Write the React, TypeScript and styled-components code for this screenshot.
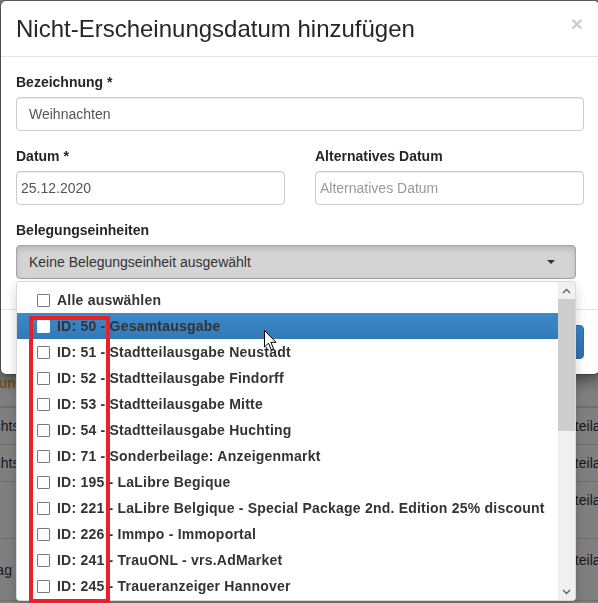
import React from "react";
import styled, { createGlobalStyle } from "styled-components";

const GlobalStyle = createGlobalStyle`
  html, body { margin: 0; padding: 0; }
  body {
    width: 598px;
    height: 603px;
    overflow: hidden;
    background: #fff;
    font-family: "Liberation Sans", Arial, sans-serif;
    font-size: 14px;
    line-height: 20px;
    color: #333;
  }
  * { box-sizing: border-box; }
`;

/* ---------- background page ---------- */
const Page = styled.div`
  position: relative;
  width: 598px;
  height: 603px;
  overflow: hidden;
`;

const PageHead = styled.div`
  height: 365px;
  padding: 20px 15px;
  font-size: 24px;
`;

const Table = styled.table`
  table-layout: fixed;
  border-collapse: collapse;
  width: 844px;
  margin-left: -77px;
`;

const Th = styled.th`
  text-align: left;
  vertical-align: top;
  padding: 8px 8px 13px;
  border-bottom: 2px solid #ddd;
  color: #f0ad4e;
  font-weight: bold;
`;

const Tr = styled.tr<{ $h: number }>`
  height: ${(p) => p.$h}px;
`;

const Td = styled.td`
  padding: 8px;
  border-bottom: 1px solid #ddd;
  vertical-align: middle;
  white-space: normal;
`;

/* ---------- modal ---------- */
const Backdrop = styled.div`
  position: fixed;
  inset: 0;
  background: rgba(0, 0, 0, 0.5);
`;

const Modal = styled.div`
  position: fixed;
  top: 0;
  left: 0;
  width: 600px;
  background: #fff;
  background-clip: padding-box;
  border: 1px solid rgba(0, 0, 0, 0.2);
  border-radius: 6px;
  box-shadow: 0 5px 15px rgba(0, 0, 0, 0.5);
`;

const Header = styled.div`
  display: flex;
  justify-content: space-between;
  align-items: flex-start;
  padding: 15px;
  border-bottom: 1px solid #e5e5e5;
`;

const Title = styled.h4`
  margin: 0;
  font-size: 24px;
  line-height: 25px;
  font-weight: normal;
  color: #262626;
`;

const Close = styled.span`
  font-size: 21px;
  line-height: 21px;
  font-weight: bold;
  color: #000;
  opacity: 0.2;
  text-shadow: 0 1px 0 #fff;
  margin-top: -3px;
  margin-right: 1px;
`;

const Body = styled.div`
  padding: 15px;
`;

const FormGroup = styled.div`
  margin-bottom: 15px;
`;

const Label = styled.label`
  display: inline-block;
  margin-bottom: 5px;
  font-weight: bold;
  font-size: 14px;
  line-height: 20px;
  color: #262626;
`;

const Input = styled.input<{ $narrow?: boolean }>`
  display: block;
  width: 100%;
  height: 34px;
  padding: 6px ${(p) => (p.$narrow ? "4px" : "12px")};
  font-family: "Liberation Sans", Arial, sans-serif;
  font-size: 14px;
  line-height: 20px;
  color: #555;
  background: #fff;
  border: 1px solid #ccc;
  border-radius: 4px;
  box-shadow: inset 0 1px 1px rgba(0, 0, 0, 0.075);
  outline: none;
  &::placeholder { color: #999; }
`;

const TwoCols = styled.div`
  display: grid;
  grid-template-columns: 1fr 1fr;
  column-gap: 30px;
`;

const SelectWrap = styled.div`
  position: relative;
  width: 560px;
`;

const SelectButton = styled.div`
  display: flex;
  align-items: center;
  justify-content: space-between;
  height: 34px;
  padding: 6px 20px 6px 12px;
  background: #d4d4d4;
  border: 1px solid #a3a3a3;
  border-radius: 4px;
  box-shadow: inset 0 3px 5px rgba(0, 0, 0, 0.125);
  color: #333;
  font-size: 14px;
`;

const Caret = styled.span`
  width: 0;
  height: 0;
  border-top: 4px solid #333;
  border-left: 4px solid transparent;
  border-right: 4px solid transparent;
`;

const Menu = styled.div`
  position: absolute;
  top: calc(100% + 2px);
  left: 0;
  width: 100%;
  height: 320px;
  display: flex;
  background: #fff;
  border: 1px solid rgba(0, 0, 0, 0.15);
  border-radius: 4px;
  box-shadow: 0 6px 12px rgba(0, 0, 0, 0.175);
  overflow: hidden;
  z-index: 1000;
`;

const List = styled.ul`
  flex: 1;
  margin: 0;
  padding: 5px 0 0;
  list-style: none;
  overflow: hidden;
`;

const Item = styled.li<{ $active?: boolean }>`
  display: flex;
  align-items: center;
  height: 26px;
  padding: 3px 20px;
  white-space: nowrap;
  font-weight: bold;
  font-size: 14px;
  letter-spacing: 0.22px;
  color: #333;
  background: ${(p) =>
    p.$active ? "linear-gradient(to bottom, #3f89c9, #3379b7)" : "transparent"};
`;

const Box = styled.span<{ $active?: boolean }>`
  flex: none;
  width: 13px;
  height: 13px;
  margin-right: 7px;
  background: #fff;
  border: 1px solid ${(p) => (p.$active ? "#f4f8fc" : "#7a7a7a")};
  border-radius: 1px;
`;

const Scrollbar = styled.div`
  flex: none;
  width: 17px;
  display: flex;
  flex-direction: column;
  background: #f0f0f0;
`;

const ScrollArrow = styled.div`
  height: 17px;
  display: flex;
  align-items: center;
  justify-content: center;
`;

const Track = styled.div`
  flex: 1;
`;

const Thumb = styled.div`
  height: 132px;
  background: #cdcdcd;
`;

const Footer = styled.div`
  display: flex;
  justify-content: flex-end;
  gap: 5px;
  padding: 15px;
  border-top: 1px solid #e5e5e5;
`;

const Button = styled.button<{ $primary?: boolean }>`
  height: 34px;
  padding: 6px 12px;
  font-family: "Liberation Sans", Arial, sans-serif;
  font-size: 14px;
  border-radius: 4px;
  border: 1px solid ${(p) => (p.$primary ? "#2e6da4" : "#ccc")};
  color: ${(p) => (p.$primary ? "#fff" : "#333")};
  background: ${(p) =>
    p.$primary ? "linear-gradient(to bottom, #3a84c3, #2f6ea8)" : "#fff"};
`;

/* ---------- overlays ---------- */
const Annotation = styled.div`
  position: absolute;
  left: 29px;
  top: 316px;
  width: 81px;
  height: 287px;
  border: 4px solid #e8202a;
  z-index: 2000;
  pointer-events: none;
`;

const Cursor = styled.svg`
  position: absolute;
  left: 264px;
  top: 330px;
  z-index: 2001;
`;

const Chevron = ({ up }: { up?: boolean }) => (
  <svg width="9" height="6" viewBox="0 0 9 6">
    <polyline
      points={up ? "1,5 4.5,1.5 8,5" : "1,1 4.5,4.5 8,1"}
      fill="none"
      stroke="#606060"
      strokeWidth="1.3"
    />
  </svg>
);

const items = [
  "Alle auswählen",
  "ID: 50 - Gesamtausgabe",
  "ID: 51 - Stadtteilausgabe Neustadt",
  "ID: 52 - Stadtteilausgabe Findorff",
  "ID: 53 - Stadtteilausgabe Mitte",
  "ID: 54 - Stadtteilausgabe Huchting",
  "ID: 71 - Sonderbeilage: Anzeigenmarkt",
  "ID: 195 - LaLibre Begique",
  "ID: 221 - LaLibre Belgique - Special Package 2nd. Edition 25% discount",
  "ID: 226 - Immpo - Immoportal",
  "ID: 241 - TrauONL - vrs.AdMarket",
  "ID: 245 - Traueranzeiger Hannover",
  "ID: 246 - Traueranzeiger Bremen",
];

const rows = [
  { h: 37, name: "1. Weihnachtstag", date: "25.12.2020", units: "Gesamtausgabe - Stadtteilausgabe Neustadt, Stadtteilausgabe Findorff" },
  { h: 37, name: "2. Weihnachtstag", date: "26.12.2020", units: "Gesamtausgabe - Stadtteilausgabe Neustadt, Stadtteilausgabe Findorff" },
  { h: 53, name: "Silvester", date: "31.12.2020", units: "Gesamtausgabe - Stadtteilausgabe Neustadt, Stadtteilausgabe Findorff, Stadtteilausgabe Mitte, Stadtteilausgabe Huchting" },
  { h: 62, name: "Ostermontag", date: "05.04.2021", units: "Gesamtausgabe - Stadtteilausgabe Neustadt, Stadtteilausgabe Findorff, Stadtteilausgabe Mitte, Stadtteilausgabe Huchting" },
  { h: 40, name: "Neujahr", date: "01.01.2021", units: "Gesamtausgabe - Stadtteilausgabe Neustadt, Stadtteilausgabe Findorff" },
];

export default function App() {
  return (
    <>
      <GlobalStyle />
      <Page>
        <PageHead>Nicht-Erscheinungsdaten</PageHead>
        <Table>
          <colgroup>
            <col style={{ width: 197 }} />
            <col style={{ width: 127 }} />
            <col style={{ width: 520 }} />
          </colgroup>
          <thead>
            <tr>
              <Th>Beschreibung</Th>
              <Th>Datum</Th>
              <Th>Belegungseinheiten</Th>
            </tr>
          </thead>
          <tbody>
            {rows.map((r) => (
              <Tr key={r.name} $h={r.h}>
                <Td>{r.name}</Td>
                <Td>{r.date}</Td>
                <Td>{r.units}</Td>
              </Tr>
            ))}
          </tbody>
        </Table>

        <Backdrop />
        <Modal>
          <Header>
            <Title>Nicht-Erscheinungsdatum hinzufügen</Title>
            <Close>×</Close>
          </Header>
          <Body>
            <FormGroup>
              <Label>Bezeichnung *</Label>
              <Input defaultValue="Weihnachten" />
            </FormGroup>
            <TwoCols>
              <FormGroup>
                <Label>Datum *</Label>
                <Input $narrow defaultValue="25.12.2020" />
              </FormGroup>
              <FormGroup>
                <Label>Alternatives Datum</Label>
                <Input $narrow placeholder="Alternatives Datum" />
              </FormGroup>
            </TwoCols>
            <FormGroup>
              <Label>Belegungseinheiten</Label>
              <SelectWrap>
                <SelectButton>
                  <span>Keine Belegungseinheit ausgewählt</span>
                  <Caret />
                </SelectButton>
                <Menu>
                  <List>
                    {items.map((t, i) => (
                      <Item key={t} $active={i === 1}>
                        <Box $active={i === 1} />
                        {t}
                      </Item>
                    ))}
                  </List>
                  <Scrollbar>
                    <ScrollArrow>
                      <Chevron up />
                    </ScrollArrow>
                    <Track>
                      <Thumb />
                    </Track>
                    <ScrollArrow>
                      <Chevron />
                    </ScrollArrow>
                  </Scrollbar>
                </Menu>
              </SelectWrap>
            </FormGroup>
          </Body>
          <Footer>
            <Button>Abbrechen</Button>
            <Button $primary>Speichern</Button>
          </Footer>
        </Modal>

        <Annotation />
        <Cursor width="13" height="21" viewBox="0 0 13 21">
          <path
            d="M0.5 0.5 L0.5 17 L4.5 13.2 L7.3 19.8 L9.6 18.8 L6.9 12.3 L12 12.3 Z"
            fill="#fff"
            stroke="#000"
            strokeWidth="1"
            strokeLinejoin="round"
          />
        </Cursor>
      </Page>
    </>
  );
}
